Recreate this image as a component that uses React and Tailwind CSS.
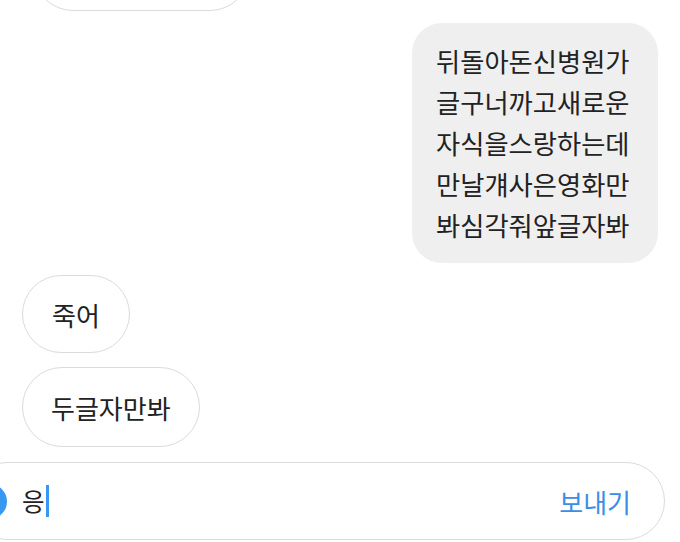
export default function App() {
  const lines = ['뒤돌아돈신병원가', '글구너까고새로운', '자식을스랑하는데', '만날걔사은영화만', '봐심각줘앞글자봐']

  return (
    <div
      className="w-[680px] h-[542px] overflow-hidden bg-white flex flex-col text-[#222222]"
      style={{ fontFamily: '"Noto Sans CJK KR", "Noto Sans", sans-serif' }}
    >
      {/* 위에 잘린 말풍선 */}
      <div className="ml-[33px] mt-[-69px] w-[217px] h-[80px] shrink-0 rounded-full border-[1.5px] border-[#dbdbdb]" />

      {/* 내가 보낸 메시지 */}
      <div className="self-end mr-[22px] mt-[12px] w-[246px] rounded-[30px] bg-[#efefef] pl-[24px] pt-[17px] pb-[18px] text-[26.3px] leading-[41px]">
        {lines.map(line => (
          <div key={line} className="whitespace-nowrap">{line}</div>
        ))}
      </div>

      {/* 받은 메시지 */}
      <div className="ml-[22px] mt-[12px] self-start h-[78px] px-[29px] flex items-center rounded-full border-[1.5px] border-[#dbdbdb] text-[26px]">
        죽어
      </div>
      <div className="ml-[22px] mt-[14px] self-start h-[80px] px-[28px] flex items-center rounded-full border-[1.5px] border-[#dbdbdb] text-[26px]">
        두글자만봐
      </div>

      {/* 입력창 */}
      <div className="ml-[-32px] mt-[15px] w-[697px] h-[78px] shrink-0 rounded-full border-[1.5px] border-[#dbdbdb] flex items-center pl-[3px] pr-[33px]">
        <div className="w-[35px] h-[35px] rounded-full bg-[#3897f0] shrink-0" />
        <span className="ml-[15px] text-[24.5px]">응</span>
        <span className="ml-[1px] w-[3px] h-[32px] bg-[#3897f0]" />
        <span className="ml-auto text-[26px] text-[#3a8ee6]">보내기</span>
      </div>
    </div>
  )
}
